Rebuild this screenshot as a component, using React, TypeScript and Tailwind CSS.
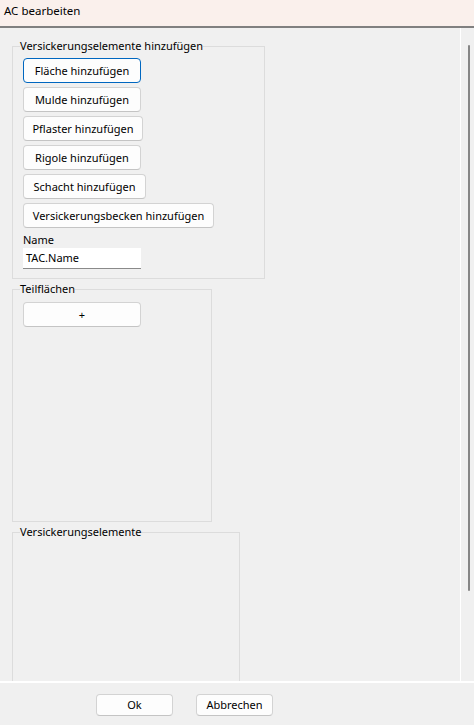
import React from 'react';

// ─── Small WinUI-style controls ─────────────────────────────────────────────

function Btn({ label, w, focused }: { label: string; w: string; focused?: boolean }) {
  return (
    <button
      type="button"
      className={`${w} h-[25px] shrink-0 rounded-[4px] border bg-[#fdfdfd] text-center leading-[22px] ${
        focused ? 'border-[#0067c0]' : 'border-[#d3d3d3] border-b-[#c4c4c4]'
      }`}
    >
      {label}
    </button>
  );
}

function Group({ title, w, children }: { title: string; w: string; children: React.ReactNode }) {
  return (
    <fieldset className={`${w} ml-[12px] border border-[#dcdcdc]`}>
      <legend className="ml-[7px] leading-[16px]">{title}</legend>
      {children}
    </fieldset>
  );
}

const ADD_BUTTONS = [
  { label: 'Fläche hinzufügen', w: 'w-[118px]', focused: true },
  { label: 'Mulde hinzufügen', w: 'w-[118px]' },
  { label: 'Pflaster hinzufügen', w: 'w-[120px]' },
  { label: 'Rigole hinzufügen', w: 'w-[118px]' },
  { label: 'Schacht hinzufügen', w: 'w-[123px]' },
  { label: 'Versickerungsbecken hinzufügen', w: 'w-[191px]' },
];

// ─── Dialog ─────────────────────────────────────────────────────────────────

export default function App() {
  return (
    <div className="flex h-[725px] w-[474px] flex-col overflow-hidden bg-[#f0f0f0] font-['Noto_Sans',sans-serif] text-[11px] text-black">
      {/* Title bar */}
      <div className="h-[28px] shrink-0 border-b-2 border-[#808080] bg-[#faf0ec] pl-[4px] text-[11.5px] leading-[22px]">
        AC bearbeiten
      </div>

      {/* Scroll viewer */}
      <div className="flex min-h-0 flex-1 border-b-2 border-white">
        <div className="w-[461px] shrink-0 overflow-hidden border-r border-white pt-[10px]">
          <Group title="Versickerungselemente hinzufügen" w="w-[253px]">
            <div className="flex flex-col items-start gap-[4px] pb-[9px] pl-[10px] pt-[4px]">
              {ADD_BUTTONS.map(b => (
                <Btn key={b.label} {...b} />
              ))}
              <div className="-mb-[4px] leading-[16px]">Name</div>
              <div className="h-[21px] w-[118px] border-b border-[#8a8a8a] bg-white pl-[3px] leading-[20px]">
                TAC.Name
              </div>
            </div>
          </Group>

          <div className="mt-[2px]">
            <Group title="Teilflächen" w="w-[200px]">
              <div className="h-[224px] pl-[10px] pt-[5px]">
                <Btn label="+" w="w-[118px]" />
              </div>
            </Group>
          </div>

          <div className="mt-[2px]">
            <Group title="Versickerungselemente" w="w-[228px]">
              <div className="h-[220px]" />
            </Group>
          </div>
        </div>

        {/* Vertical scrollbar */}
        <div className="flex-1 pl-[7px] pt-[17px]">
          <div className="h-[546px] w-[2px] rounded-full bg-[#868686]" />
        </div>
      </div>

      {/* Footer */}
      <div className="flex h-[42px] shrink-0 items-start gap-[23px] pl-[96px] pt-[11px]">
        <button type="button" className="h-[22px] w-[77px] rounded-[4px] border border-[#d3d3d3] border-b-[#c4c4c4] bg-[#fdfdfd]">
          Ok
        </button>
        <button type="button" className="h-[22px] w-[77px] rounded-[4px] border border-[#d3d3d3] border-b-[#c4c4c4] bg-[#fdfdfd]">
          Abbrechen
        </button>
      </div>
    </div>
  );
}
